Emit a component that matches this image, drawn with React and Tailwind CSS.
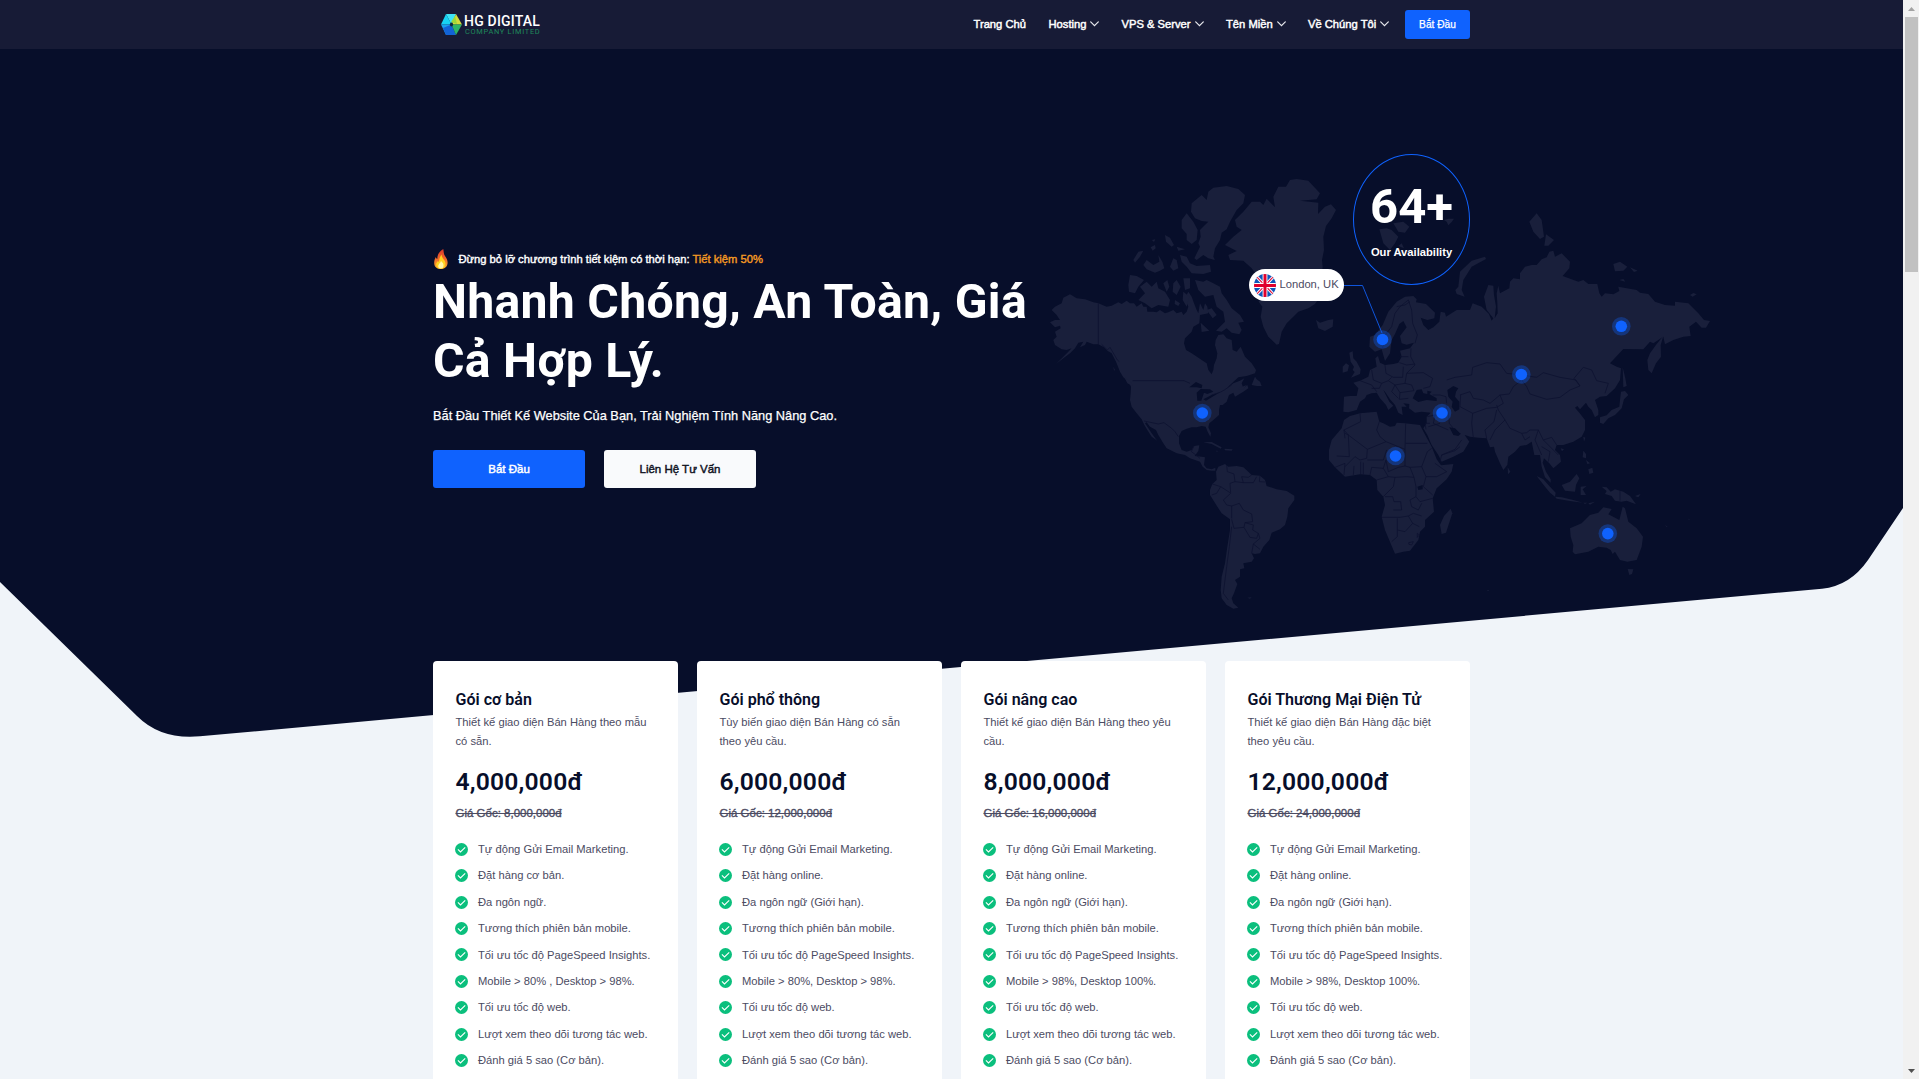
import React from "react";

const NAV = [
  { label: "Trang Chủ", cls: "w-[75px]" },
  { label: "Hosting", cls: "w-[73px]", menu: true },
  { label: "VPS & Server", cls: "w-[104.5px]", menu: true },
  { label: "Tên Miền", cls: "w-[82px]", menu: true },
  { label: "Về Chúng Tôi", cls: "w-[97px]", menu: true },
];

const TAIL = ["Tối ưu tốc độ web.", "Lượt xem theo dõi tương tác web.", "Đánh giá 5 sao (Cơ bản)."];
const items = (order, lang, speed) => [
  "Tự động Gửi Email Marketing.",
  order,
  lang,
  "Tương thích phiên bản mobile.",
  "Tối ưu tốc độ PageSpeed Insights.",
  speed,
  ...TAIL,
];

const PLANS = [
  {
    name: "Gói cơ bản",
    desc: ["Thiết kế giao diện Bán Hàng theo mẫu", "có sẵn."],
    price: "4,000,000đ",
    old: "Giá Gốc: 8,000,000đ",
    features: items("Đặt hàng cơ bản.", "Đa ngôn ngữ.", "Mobile > 80% , Desktop > 98%."),
  },
  {
    name: "Gói phổ thông",
    desc: ["Tùy biến giao diện Bán Hàng có sẵn", "theo yêu cầu."],
    price: "6,000,000đ",
    old: "Giá Gốc: 12,000,000đ",
    features: items("Đặt hàng online.", "Đa ngôn ngữ (Giới hạn).", "Mobile > 80%, Desktop > 98%."),
  },
  {
    name: "Gói nâng cao",
    desc: ["Thiết kế giao diện Bán Hàng theo yêu", "cầu."],
    price: "8,000,000đ",
    old: "Giá Gốc: 16,000,000đ",
    features: items("Đặt hàng online.", "Đa ngôn ngữ (Giới hạn).", "Mobile > 98%, Desktop 100%."),
  },
  {
    name: "Gói Thương Mại Điện Tử",
    desc: ["Thiết kế giao diện Bán Hàng đặc biệt", "theo yêu cầu."],
    price: "12,000,000đ",
    old: "Giá Gốc: 24,000,000đ",
    features: items("Đặt hàng online.", "Đa ngôn ngữ (Giới hạn).", "Mobile > 98%, Desktop 100%."),
  },
];

function Logo() {
  return (
    <div className="flex items-start">
      <svg className="mt-[14px] h-[21px] w-[21px]" viewBox="0 0 21 21">
        <path d="M5 0L15 0L10.5 10.5Z" fill="#3fe3f5" />
        <path d="M5 0L0 10.5L10.5 10.5Z" fill="#17d3f3" />
        <path d="M0 10.5L5 21L10.5 10.5Z" fill="#1aa0ee" />
        <path d="M2 14L5 21L15 21L10.5 10.5Z" fill="#1263d6" />
        <path d="M15 0L21 10.5L10.5 10.5Z" fill="#d4dc3a" />
        <path d="M10 8L14 2L16 10Z" fill="#9bd83c" />
        <path d="M21 10.5L15 21L10.5 10.5Z" fill="#2db567" />
        <ellipse cx="10.5" cy="10.5" rx="1.6" ry="2" fill="#0c2a3c" />
      </svg>
      <div className="ml-[2px] mt-[14px] flex flex-col">
        <span className="h-[13px] whitespace-nowrap text-[14px] font-medium leading-[14px] tracking-[0.2px] text-white">HG DIGITAL</span>
        <span className="mt-px h-[7px] whitespace-nowrap pl-px text-[7.4px] leading-[8px] tracking-[0.72px] text-[#1f8a5b]">COMPANY LIMITED</span>
      </div>
    </div>
  );
}

function Chevron() {
  return (
    <svg className="ml-[4px] h-[6px] w-[9px]" viewBox="0 0 9 6" fill="none" stroke="#e8e9ee" strokeWidth="1.2" strokeLinecap="round">
      <path d="M0.7 0.9L4.5 4.7L8.3 0.9" />
    </svg>
  );
}

function Header() {
  return (
    <header className="relative h-[49px] bg-[#171b36]">
      <div className="mx-auto flex h-full w-[1037px] justify-between pl-[8px]">
        <Logo />
        <div className="flex h-full items-center">
          <nav className="flex font-[Liberation_Sans] text-[11.2px] text-white [-webkit-text-stroke:0.45px]">
            {NAV.map((n) => (
              <a key={n.label} className={"flex items-center whitespace-nowrap leading-none " + n.cls}>
                {n.label}
                {n.menu && <Chevron />}
              </a>
            ))}
          </nav>
          <button className="flex h-[29px] w-[65px] items-center justify-center rounded-[3px] bg-[#0f62fe] font-[Liberation_Sans] text-[10.2px] text-white [-webkit-text-stroke:0.25px]">
            Bắt Đầu
          </button>
        </div>
      </div>
    </header>
  );
}

function Flame() {
  return (
    <svg className="ml-px h-[20px] w-[14px]" viewBox="0 0 14 20">
      <defs>
        <linearGradient id="flame" x1="0" y1="0" x2="0" y2="1">
          <stop offset="0" stopColor="#d9382a" />
          <stop offset="0.45" stopColor="#f0642a" />
          <stop offset="1" stopColor="#fbb02a" />
        </linearGradient>
      </defs>
      <path d="M9.3 0C9.8 3 9.6 4.8 11 7C12.8 9.5 13.7 11.5 13.6 14C13.3 17.5 11 20 7 20C3 20 0.3 17.8 0.2 14.2C0.1 11.5 1 9.5 1.8 8C2.1 9 2.6 9.8 3.3 10C3.2 6 5 2.5 9.3 0Z" fill="url(#flame)" />
      <path d="M7.7 5.5C7.4 8.5 10 10 11 12.5C12.3 16 10.5 19.7 7 19.7C3.6 19.7 1.7 17.5 2.2 14.5C2.7 13.5 3.2 13 3.5 12.3C4.4 13.2 5 12.6 5.2 11.5C5.5 9.2 6 7.5 7.7 5.5Z" fill="#ffd21f" />
      <path d="M7 12C8.8 13.5 9.8 15 9.5 17C9.2 18.8 8.3 19.5 6.8 19.5C5 19.5 4 18.2 4.2 16.8C4.5 15.2 6.3 14.2 7 12Z" fill="#fff6a8" />
    </svg>
  );
}

const NORTH_AMERICA = [
  "M120 463L140 475 165 478 190 487 205 490 230 500 245 497 265 487 275 492 290 482 300 490 312 490 320 500 335 490 340 500 350 500 352 515 370 515 380 517 390 510 405 520 415 517 430 510 440 520 455 515 460 525 470 515 475 500 465 475 475 455 485 470 492 490 500 510 505 520 510 490 520 510 525 490 532 500 535 520 510 525 508 550 490 560 485 575 465 595 462 610 468 630 485 640 515 660 530 670 535 690 545 703 550 690 552 675 560 655 562 640 555 615 557 600 565 585 580 583 590 595 605 600 608 630 620 635 632 620 645 650 665 670 678 690 675 700 650 708 625 712 600 735 590 745 610 730 630 722 643 715 635 730 640 745 652 735 655 745 640 755 615 770 610 758 597 765 590 785 578 795 570 795 567 810 567 825 550 840 538 850 535 862 543 880 541 890 533 875 527 860 515 858 500 862 485 862 470 866 455 873 447 888 447 910 455 930 470 935 485 930 492 918 508 916 505 933 494 948 515 950 525 952 522 975 530 985 545 988 556 983 556 992 545 992 530 990 518 980 510 965 495 960 480 955 465 945 440 940 410 925 400 910 385 885 378 870 360 860 350 847 345 850 355 865 365 880 378 898 382 902 365 890 352 870 343 855 335 838 320 820 305 800 300 780 302 760 303 740 295 725 280 712 270 695 258 665 245 640 232 632 222 622 205 613 190 613 170 605 165 615 150 622 160 605 145 608 135 625 120 640 100 655 78 672 100 650 115 635 125 625 110 630 95 628 75 615 70 600 80 590 75 575 92 565 90 557 75 562 60 547 75 540 90 540 80 525 65 510 75 500 95 490 100 473Z",
  "M640 215L665 185 690 185 700 195 710 176 735 202 730 170 745 140 768 140 780 120 800 117 835 122 870 160 860 178 810 182 865 188 864 222 885 200 903 193 918 210 905 235 888 258 880 290 882 330 876 360 878 380 870 470 855 492 835 505 805 515 770 550 755 575 747 612 740 614 715 590 700 560 692 530 697 500 686 485 700 440 680 405 665 385 640 362 600 360 595 345 620 333 585 315 610 290 635 270 620 260 615 240Z",
  "M485 190L515 165 530 180 535 155 550 143 590 138 625 147 645 165 640 190 620 210 600 245 590 268 575 278 570 300 555 325 550 350 555 360 535 355 520 345 500 360 493 355 510 320 505 310 512 290 510 270 525 255 535 245 515 243 495 235 483 215Z",
  "M470 220L490 245 503 270 500 300 485 312 470 300 470 282 455 265 455 240Z",
  "M340 332L330 350 315 368 310 360 325 335Z",
  "M362 322L375 315 377 325 368 332ZM366 300L376 298 372 306ZM440 320L465 328 445 332Z",
  "M340 375L350 360 370 375 388 365 385 345 397 365 403 385 390 392 375 398 350 388Z",
  "M405 285L420 293 432 315 425 320 408 305Z",
  "M430 355L440 360 445 385 430 392 420 380Z",
  "M450 345L470 350 480 370 500 378 540 375 543 395 520 402 485 400 470 380 455 365Z",
  "M295 435L300 405 320 408 342 420 325 440 315 460 297 455Z",
  "M330 440L350 425 365 440 380 425 385 445 405 455 420 480 415 500 385 495 365 505 345 490 325 480 345 460Z",
  "M400 430L412 420 418 440 410 455ZM430 430L440 420 452 440 440 465 428 455ZM460 415L480 415 480 445 465 450ZM435 480L450 490 445 498 434 492ZM460 455L478 470 470 500 458 480Z",
  "M495 420L520 425 530 420 550 430 570 440 575 460 590 480 605 505 630 525 642 545 625 548 635 570 628 583 605 578 590 565 575 575 558 572 585 545 580 515 560 500 550 465 525 470 505 450Z",
  "M512 548L525 560 538 572 515 576ZM530 510L545 505 560 525 548 535Z",
  "M665 735L675 710 680 718 690 725 695 738 680 738Z",
  "M625 745L650 735 640 748 627 750Z",
  "M858 540L870 548 895 540 910 538 908 560 885 573 865 565Z",
  "M958 638L968 634 970 655 980 665 992 688 990 702 963 713 974 696 968 690 972 680 962 665Z",
  "M938 680L948 670 957 676 953 694 938 698Z",
  "M520 907L545 906 575 922 572 926 545 912Z",
  "M583 926L608 928 605 932 585 931ZM558 932L566 933 560 935Z",
  "M250 680L255 690 252 692ZM283 712L305 728 308 738 292 730Z",
];

const SOUTH_AMERICA = [
  "M565 260L585 252 595 260 620 258 640 262 655 275 665 285 690 287 705 300 710 318 740 328 770 333 793 347 793 360 775 385 772 410 765 435 750 448 725 458 718 480 700 500 690 520 675 522 665 520 672 535 665 545 640 550 643 565 630 568 630 590 615 600 622 612 612 640 605 655 610 670 625 683 610 686 590 675 575 655 572 630 575 590 585 550 592 500 600 450 600 418 575 400 565 385 540 345 540 330 547 312 560 300 558 275Z",
  "M652 653L665 652 660 656Z",
];

const EURASIA = [
  "M195 470L220 468 230 478 228 487 258 492 285 518 283 535 262 540 242 533 250 555 265 570 280 562 298 545 302 515 315 518 318 530 350 510 390 510 398 490 425 500 447 522 455 542 460 535 440 510 432 470 445 435 460 437 462 465 468 500 464 535 473 520 472 490 470 460 475 437 480 460 508 445 510 425 520 415 540 418 540 400 555 380 575 375 590 375 605 358 620 352 628 335 640 332 645 350 665 340 690 365 688 385 668 408 715 425 730 420 745 432 772 432 778 460 785 470 795 460 820 463 838 453 835 440 890 450 900 458 925 462 945 485 975 495 1005 497 1005 485 1045 490 1075 520 1092 540 1110 543 1098 563 1085 563 1068 545 1048 560 1052 588 1030 590 1000 600 975 613 970 590 940 610 930 605 910 628 850 627 810 670 830 680 843 685 840 720 825 745 800 768 780 770 765 780 775 810 775 825 765 832 755 810 745 800 738 788 720 808 712 798 705 803 718 818 735 840 735 870 725 890 700 905 670 915 650 915 645 930 660 945 663 965 640 985 628 970 612 955 608 968 618 995 632 1018 632 1028 615 1012 605 980 600 945 583 945 575 905 560 915 540 918 525 935 505 950 502 975 490 990 480 970 465 935 462 920 450 922 440 895 415 893 390 890 360 880 345 865 328 862 340 885 355 888 368 876 388 905 370 935 340 950 305 965 295 945 275 915 262 885 250 865 260 850 260 830 272 818 245 815 225 818 207 805 208 792 190 790 200 800 185 800 188 825 175 818 165 795 150 778 135 755 130 750 148 785 160 797 145 810 138 795 120 775 110 758 95 760 80 765 75 775 60 785 50 810 25 817 10 815 12 770 30 768 50 768 55 745 40 728 60 722 85 710 90 690 110 680 106 655 114 648 120 668 135 675 160 672 175 668 185 650 180 632 210 625 222 608 200 614 185 610 180 588 200 562 190 543 178 552 165 582 155 600 150 640 135 663 125 628 105 635 88 620 90 590 105 585 128 555 145 515 170 485Z",
  "M435 350L438 357 395 380 370 420 365 450 374 470 350 462 346 450 355 440 360 395 395 362Z",
  "M118 268L140 265 155 270 175 290 165 310 150 330 130 310ZM160 250L190 245 208 260 195 278 175 275ZM175 318L185 310 192 325Z",
  "M590 220L605 240 612 290 600 297 580 275 568 245ZM618 283L642 300 625 317 613 317Z",
  "M820 372L840 365 862 380 850 392 825 394ZM870 382L893 392 882 396ZM838 420L850 417 856 425ZM1050 465L1060 459 1070 463 1058 470Z",
  "M312 240L325 236 342 236 335 246 325 256 320 245Z",
  "M843 755L855 753 865 765 852 778 845 805 825 825 805 835 790 852 780 848 780 832 800 826 815 810 838 800 840 780Z",
  "M848 682L856 715 860 738 850 742Z",
  "M970 588L962 615 963 650 948 670 935 700 925 690 922 660 930 640 950 612Z",
  "M730 890L736 893 732 905ZM662 925L672 928 666 934Z",
];

const AFRICA_OCEANIA = [
  "M30 108L60 100 110 95 118 125 130 130 150 140 165 138 170 128 195 130 240 135 252 158 275 200 290 238 303 256 340 252 335 275 320 298 290 325 278 355 282 395 255 420 255 440 240 455 235 480 210 512 190 515 165 521 158 505 135 450 125 410 135 375 130 350 112 330 110 300 90 285 60 283 15 290 -15 262 -33 240 -33 210 -25 180 5 145 12 120Z",
  "M332 386L337 400 318 458 305 462 300 435 312 408Z",
  "M503 262L511 275 504 283Z",
  "M590 288L610 298 630 320 647 338 645 350 630 338 615 320Z",
  "M645 350L665 352 700 360 728 368 690 363 650 356ZM745 370L765 365 750 374ZM730 368L742 368 735 372Z",
  "M665 315L690 305 710 282 718 295 708 315 705 335 675 332Z",
  "M722 320L740 318 728 328 738 345 722 345Z",
  "M730 212L738 222 738 235 728 232ZM738 240L750 250 742 252ZM745 268L757 263 760 278 748 282Z",
  "M785 320L800 322 812 335 825 328 850 335 870 348 888 373 860 362 845 365 825 362 815 348 795 342 800 333ZM885 348L902 342 895 352Z",
  "M690 445L725 430 750 405 775 398 790 382 815 387 805 403 838 420 848 380 855 385 865 425 890 445 909 470 905 500 890 540 862 545 840 540 825 515 818 522 812 510 800 503 775 500 745 515 705 523 698 515 700 495 692 470Z",
  "M863 567L880 568 876 582 868 585Z",
  "M975 435L983 440 980 441ZM1045 416L1050 418 1046 419ZM441 630L448 631 444 634Z",
];

const DOTS = [
  [172.3, 273],
  [352.5, 199.5],
  [591.3, 186.3],
  [491.3, 234.5],
  [412, 273],
  [365.5, 316],
  [577.8, 393.6],
];

const shapes = (list) => list.map((d) => <path key={d} d={d} />);

function WorldMap() {
  return (
    <svg className="h-[490px] w-[710px]" viewBox="0 0 710 490" fill="none">
      <g fill="#191f3b">
        <g transform="scale(0.33333)">{shapes(NORTH_AMERICA)}</g>
        <g transform="translate(0 240) scale(0.33333)">{shapes(SOUTH_AMERICA)}</g>
        <g transform="translate(310 0) scale(0.33333)">{shapes(EURASIA)}</g>
        <g transform="translate(310 240) scale(0.33333)">{shapes(AFRICA_OCEANIA)}</g>
      </g>
      <g fill="#070e2a">
        <g transform="scale(0.33333)">
          <path d="M478 742L498 726 517 735 515 745 500 742ZM502 782L500 758 512 747 540 748 550 755 532 762 522 758 514 782ZM520 778L545 765 570 757 545 772 528 782Z" />
        </g>
        <g transform="translate(310 0) scale(0.33333)">
          <path d="M218 775L230 750 245 748 250 760 262 762 262 752 275 755 268 762 290 775 290 783 260 780 235 786ZM322 750L340 738 355 745 348 755 345 770 358 785 358 808 345 815 335 800 338 785 325 770ZM232 1040L248 1035 248 1048 235 1050Z" />
        </g>
      </g>
      <g stroke="#0c1230" strokeWidth="2.4" strokeLinejoin="round">
        <g transform="scale(0.33333)">
          <path d="M205 490V613M215 613L232 630 240 622 262 660 268 665M308 722H462L480 730M545 765L570 757 583 750 605 735M342 843L385 852 402 848 425 865 435 875 445 890M492 918L484 935 498 945 510 955" />
        </g>
        <g transform="translate(0 240) scale(0.33333)">
          <path d="M590 255L592 275 612 282 615 305 600 310 602 340M547 312L572 320 600 338M572 320L560 340 545 345M602 340L580 360 590 375 605 378 628 370M615 305L640 308 635 290 655 292 665 285M640 308L670 308 680 290M690 287L688 305 705 306M605 378V415M628 370L640 390 665 402 668 425 645 428 642 442 612 445 605 418M605 440L598 500 590 560 585 600 580 640 595 660M645 428L670 435 668 450 685 460 680 475 660 472 642 442M685 460L690 475 670 492 690 508M670 492L665 520" />
        </g>
        <g transform="translate(310 0) scale(0.33333)">
          <path d="M205 480L215 510 218 550 232 585 225 610M205 480L180 500 165 520 155 560 132 590 128 625M210 485L195 495 170 500M213 625L212 650 225 675 200 700M180 650L205 650M178 668L200 675 225 672M135 675L138 700 160 712 188 712 190 680M95 690L100 720 125 730 145 722 155 712M60 722L95 735 110 755M125 730L118 745 95 745M145 722L165 735 155 755 175 775M165 735L195 730 215 735 222 752 180 758 165 735M195 730L200 700 250 698 278 715 270 740 250 745M180 758L178 778 205 775M278 765L300 765 318 770 320 790M320 720L345 712 395 705 398 682 440 668 480 672 500 700 545 705M360 765L390 755 400 775 430 780 450 790 480 765 508 762 520 740 545 720M545 705L590 712 610 698 660 712 708 720 720 738 690 750 660 772 620 778 570 762 560 740 545 720M720 738L702 715 730 682 755 690 770 722 805 730 795 760M262 830L285 825 325 820 318 795M325 820L328 850 340 865M285 825L280 850 325 870M265 860L300 850M400 893L395 850 398 820 360 800 362 765M398 820L440 805 470 802 490 790 480 765M440 895L435 870 462 845 470 810M450 900L465 870 495 840 475 810 470 795M495 840L510 865 545 880 560 878 570 870 595 870M545 880L555 900 570 890M595 870L610 900 635 892 650 915M595 870L585 900 605 945M610 900L640 930 655 945M605 920L630 935 625 965M258 868L255 850 270 850M305 945L345 928 365 900" />
        </g>
        <g transform="translate(310 240) scale(0.33333)">
          <path d="M60 100L62 125 12 150 15 175M12 150L25 165 82 208 138 185 195 208 197 130M118 125L110 150 120 170 138 185M197 190H262M15 160L25 165 28 230 -10 228M82 208L80 235 60 240 45 230 15 260M82 240L130 240 140 210M-15 262L15 250 12 285M40 285L42 258M62 283V245M70 283V248M90 285L95 262 130 265 138 240M138 240L145 275 175 262 195 258 195 208M130 265L145 290 110 300M145 290L165 292 200 290 222 292 210 262 195 258M210 262L245 260 262 215 275 205M245 260L258 290 290 290 320 275 285 250M258 290L250 320 278 345M165 292L160 320 130 350M222 292L228 320 228 350 240 365 278 355M135 350H158L162 365H182L185 390H160M228 350L210 360 215 380 235 390 245 370M125 412H180L205 408 220 400 245 408M172 415V470L155 485M172 450L195 455 218 430 205 408M218 430L238 440M206 488L220 485 215 495 207 493ZM232 460L238 465 232 472ZM840 332V362M300 245L305 225 345 212 360 200" />
        </g>
      </g>
      <path d="M314 145.5H332.5L352 193" stroke="#0f55dc" strokeWidth="1" />
      {DOTS.map(([x, y]) => (
        <g key={x}>
          <circle cx={x} cy={y} r="9.3" fill="#0f62fe" fillOpacity="0.32" />
          <circle cx={x} cy={y} r="5.8" fill="#0f62fe" />
        </g>
      ))}
    </svg>
  );
}

function UkFlag() {
  return (
    <svg className="h-[23px] w-[22px]" viewBox="0 0 22 22" preserveAspectRatio="none">
      <clipPath id="uk">
        <circle cx="11" cy="11" r="11" />
      </clipPath>
      <g clipPath="url(#uk)">
        <rect width="22" height="22" fill="#0f56bb" />
        <path d="M0 0L22 22M22 0L0 22" stroke="#fff" strokeWidth="3" />
        <path d="M0 0L22 22M22 0L0 22" stroke="#e0103a" strokeWidth="1.1" />
        <path d="M11 0V22M0 11H22" stroke="#fff" strokeWidth="4.8" />
        <path d="M11 0V22M0 11H22" stroke="#e0002d" strokeWidth="3" />
      </g>
    </svg>
  );
}

function Hero() {
  return (
    <section className="relative mx-auto flex h-[612px] w-[1037px]">
      <div className="w-[597px] shrink-0 pt-[200px]">
        <div className="flex h-[20px] items-center font-[Liberation_Sans] text-[11.2px] text-white [-webkit-text-stroke:0.4px]">
          <Flame />
          <p className="ml-[10.5px] whitespace-nowrap">
            Đừng bỏ lỡ chương trình tiết kiệm có thời hạn: <span className="text-[#f59a23]">Tiết kiệm 50%</span>
          </p>
        </div>
        <h1 className="mt-[3px] whitespace-nowrap text-[48.2px] font-bold leading-[59px] tracking-[0.27px] text-white">
          Nhanh Chóng, An Toàn, Giá
          <br />
          Cả Hợp Lý.
        </h1>
        <p className="mt-[16px] whitespace-nowrap font-[Liberation_Sans] text-[12.8px] leading-[20px] text-white [-webkit-text-stroke:0.25px]">
          Bắt Đầu Thiết Kế Website Của Bạn, Trải Nghiệm Tính Năng Nâng Cao.
        </p>
        <div className="mt-[24px] flex gap-[19px] font-[Liberation_Sans] text-[11.5px] [-webkit-text-stroke:0.45px]">
          <button className="h-[38px] w-[152px] rounded-[3px] bg-[#0f62fe] pt-[2px] text-white">Bắt Đầu</button>
          <button className="h-[38px] w-[152px] rounded-[3px] bg-[#f9fafc] pt-[2px] text-[#10131f]">Liên Hệ Tư Vấn</button>
        </div>
      </div>
      <div className="relative h-[490px] w-[710px] shrink-0 translate-y-[91px]">
        <WorldMap />
        <div className="absolute left-[323px] top-[14px] flex h-[131px] w-[117px] flex-col items-center rounded-[50%] border border-[#0f62fe] text-white">
          <span className="mt-[27px] text-[49px] font-bold leading-[50px]">64+</span>
          <span className="mt-[13px] whitespace-nowrap font-[Liberation_Sans] text-[11.2px] font-bold leading-[14px]">Our Availability</span>
        </div>
        <div className="absolute left-[219px] top-[129px] flex h-[32px] w-[95px] items-center rounded-full bg-white pl-[5px]">
          <UkFlag />
          <span className="ml-[3.5px] whitespace-nowrap font-[Liberation_Sans] text-[11.2px] leading-none text-[#4b4b62]">London, UK</span>
        </div>
      </div>
    </section>
  );
}

function CheckBadge() {
  return (
    <svg className="h-[13px] w-[13px] shrink-0" viewBox="0 0 13 13" fill="none">
      <circle cx="6.5" cy="6.5" r="6.5" fill="#0bbf7d" />
      <path d="M2.9 6.4L5.5 9L10.2 4.3" stroke="#fff" strokeWidth="1.1" />
    </svg>
  );
}

function PlanCard({ plan }) {
  return (
    <article className="h-[600px] w-[245px] rounded-[4px] bg-white pl-[22.5px] pt-[29px]">
      <h3 className="whitespace-nowrap text-[16.05px] font-semibold leading-[20px] text-[#070e2a]">{plan.name}</h3>
      <p className="mt-[3px] whitespace-nowrap font-[Liberation_Sans] text-[11.2px] leading-[19px] text-[#4b4b62]">
        {plan.desc[0]}
        <br />
        {plan.desc[1]}
      </p>
      <div className="mt-[16px] text-[24.7px] font-semibold leading-[30px] tracking-[0.18px] text-[#070e2a]">{plan.price}</div>
      <div className="mt-[8px] font-[Liberation_Sans] text-[11.5px] leading-[16px] text-[#4b4b62] line-through [-webkit-text-stroke:0.35px]">{plan.old}</div>
      <ul className="-ml-px mt-[15px] font-[Liberation_Sans] text-[11.2px] text-[#4b4b62]">
        {plan.features.map((f) => (
          <li key={f} className="flex h-[26.45px] items-center whitespace-nowrap">
            <CheckBadge />
            <span className="ml-[10.5px]">{f}</span>
          </li>
        ))}
      </ul>
    </article>
  );
}

function Scrollbar() {
  return (
    <div className="flex h-full w-[16px] flex-col items-center bg-[#f1f1f1]">
      <svg className="h-[17px] w-[16px]" viewBox="0 0 16 17">
        <path d="M5 11H12L8.5 7Z" fill="#a3a3a3" />
      </svg>
      <div className="h-[255px] w-[13px] bg-[#c1c1c1]" />
      <svg className="mt-auto h-[17px] w-[16px]" viewBox="0 0 16 17">
        <path d="M5 7H12L8.5 11Z" fill="#505050" />
      </svg>
    </div>
  );
}

export default function App() {
  return (
    <div className="flex h-[1079px] w-[1919px] overflow-hidden font-[Roboto,sans-serif]">
      <main className="relative h-full w-[1903px] overflow-hidden bg-[#f0f4f9]">
        <svg className="absolute left-0 top-0 h-[760px] w-[1903px]" viewBox="0 0 1903 760">
          <path d="M0 0H1903V508L1868 560Q1850 586 1822 588.7L200 736.3Q161 740 137 716L0 582Z" fill="#070e2a" />
        </svg>
        <Header />
        <Hero />
        <section className="relative mx-auto flex w-[1037px] justify-between">
          {PLANS.map((p) => (
            <PlanCard key={p.name} plan={p} />
          ))}
        </section>
      </main>
      <Scrollbar />
    </div>
  );
}
